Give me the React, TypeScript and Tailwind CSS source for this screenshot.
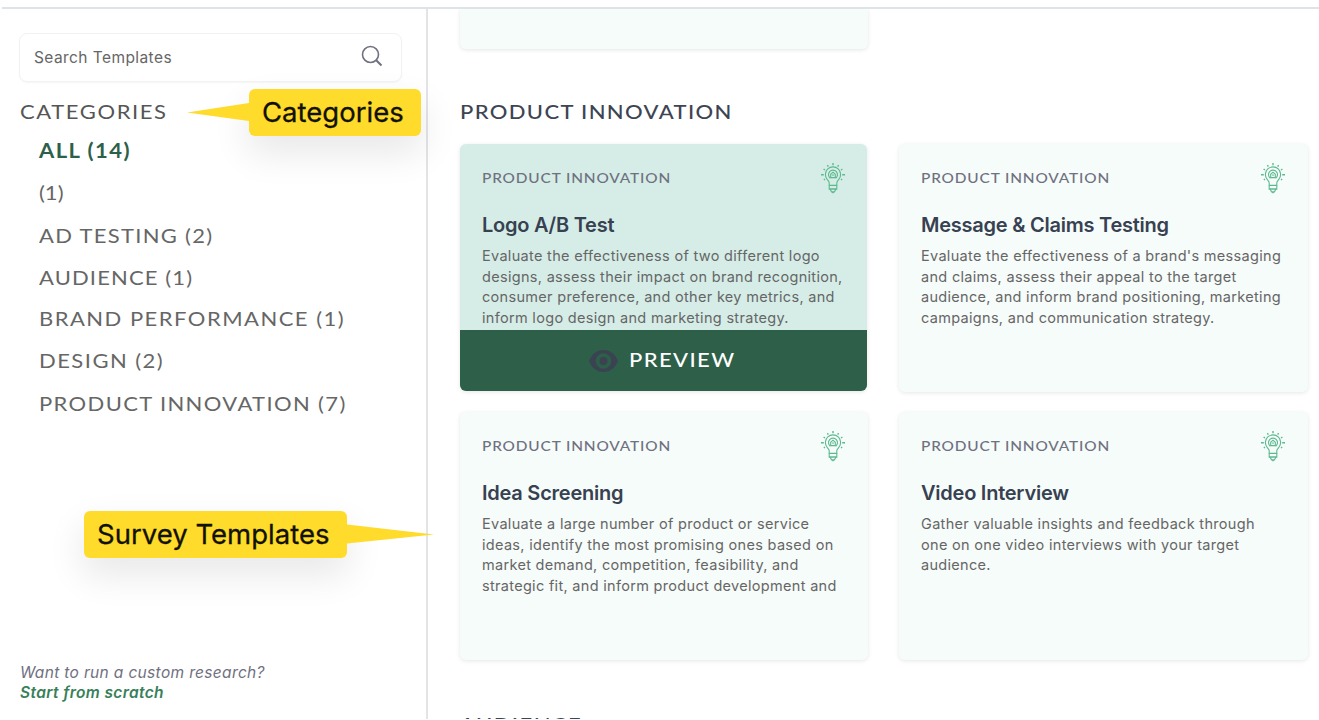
import type { ReactNode } from "react";

function Wide({ children, className = "" }: { children: ReactNode; className?: string }) {
  return (
    <span className={`inline-block origin-left scale-x-110 whitespace-nowrap font-['Lato',sans-serif] ${className}`}>
      {children}
    </span>
  );
}

function BulbIcon() {
  return (
    <svg width="24" height="31" viewBox="0 0 24 31" fill="none" stroke="#5cb98f" strokeWidth="1.1" className="mr-px shrink-0">
      <path strokeWidth="1.4" d="M12 0v2.200M6.400 2.200l.9 1.500M17.600 2.200l-.9 1.500M2.600 6.200l1.400.8M21.400 6.200l-1.400.8M0 11.800h2.800M21.200 11.800H24M2.800 16.900l1.200-.7M21.200 16.900l-1.200-.7" />
      <path d="M8.2 22.4v-2.700c0-1.300-1-2-2-3.300A7.600 7.600 0 1 1 17.800 16.400c-1 1.300-2 2-2 3.300v2.700z" />
      <path d="M9.300 15.200a4.500 4.500 0 1 1 5.400 0" />
      <path d="M9.700 14.600v-3.300L12 9.200l2.300 2.100v3.300zM12 11.300v1.600" />
      <path d="M8.200 22.400v3.900h7.600v-3.900M8.200 25.800h7.600M9.200 26.500l1.400 2.400h2.800l1.400-2.400M10.600 28.600l1.400 1.200 1.400-1.200" />
    </svg>
  );
}

function EyeIcon() {
  return (
    <svg width="29" height="22" viewBox="0 0 29 22">
      <path
        fill="#3b4252"
        fillRule="evenodd"
        d="M14.500 0C8 0 2.600 4.400 0 11c2.600 6.600 8 11 14.500 11S26.400 17.600 29 11C26.400 4.400 21 0 14.500 0Zm0 18.800a7.800 7.800 0 1 1 0-15.600 7.800 7.800 0 0 1 0 15.600Zm0-3.800a4 4 0 1 0 0-8 4 4 0 0 0 0 8Z"
      />
    </svg>
  );
}

function Callout({ text, side, className }: { text: string; side: "left" | "right"; className: string }) {
  return (
    <div className={`absolute z-10 flex h-[47px] items-center rounded-[6px] bg-[#ffdb2b] shadow-[0_16px_36px_2px_rgba(0,0,0,0.09)] ${className}`}>
      <span className="whitespace-nowrap text-[27.5px] leading-none text-[#111100] [-webkit-text-stroke:0.3px_#111100]">{text}</span>
      {side === "left" ? (
        <svg className="absolute right-full top-[13px]" width="62" height="20" viewBox="0 0 62 20">
          <path d="M62 1v18L0 10.500Z" fill="#ffdb2b" />
        </svg>
      ) : (
        <svg className="absolute left-full top-[13px]" width="87" height="20" viewBox="0 0 87 20">
          <path d="M0 .5v19L87 10.500Z" fill="#ffdb2b" />
        </svg>
      )}
    </div>
  );
}

const categories = [
  { label: "ALL (14)", style: "font-bold text-[#2c6049] tracking-[1.3px]", row: "h-[41px]" },
  { label: "(1)", style: "text-[#666] tracking-[0px]", row: "h-[43px]" },
  { label: "AD TESTING (2)", style: "text-[#666] tracking-[1.17px]", row: "h-[43px]" },
  { label: "AUDIENCE (1)", style: "text-[#666] tracking-[1.03px]", row: "h-[41px]" },
  { label: "BRAND PERFORMANCE (1)", style: "text-[#666] tracking-[1.34px]", row: "h-[42px]" },
  { label: "DESIGN (2)", style: "text-[#666] tracking-[1.33px]", row: "h-[42px]" },
  { label: "PRODUCT INNOVATION (7)", style: "text-[#666] tracking-[1.24px]", row: "h-[44px]" },
];

type Template = { title: string; lines: string[]; active?: boolean };

const templates: Template[] = [
  {
    title: "Logo A/B Test",
    active: true,
    lines: [
      "Evaluate the effectiveness of two different logo",
      "designs, assess their impact on brand recognition,",
      "consumer preference, and other key metrics, and",
      "inform logo design and marketing strategy.",
    ],
  },
  {
    title: "Message & Claims Testing",
    lines: [
      "Evaluate the effectiveness of a brand's messaging",
      "and claims, assess their appeal to the target",
      "audience, and inform brand positioning, marketing",
      "campaigns, and communication strategy.",
    ],
  },
  {
    title: "Idea Screening",
    lines: [
      "Evaluate a large number of product or service",
      "ideas, identify the most promising ones based on",
      "market demand, competition, feasibility, and",
      "strategic fit, and inform product development and",
    ],
  },
  {
    title: "Video Interview",
    lines: [
      "Gather valuable insights and feedback through",
      "one on one video interviews with your target",
      "audience.",
    ],
  },
];

function Card({ t }: { t: Template }) {
  return (
    <article
      className={`flex flex-col overflow-hidden rounded-[6px] shadow-[0_1px_4px_rgba(0,0,0,0.1)] ${
        t.active ? "mb-px mr-px bg-[#d5ede6]" : "bg-[#f6fcfa]"
      }`}
    >
      <div className={`flex h-[186px] shrink-0 flex-col pl-[22px] pt-[19px] ${t.active ? "pr-[21px]" : "pr-[22px]"}`}>
        <div className="flex h-[31px] items-start justify-between">
          <Wide className="pt-[5px] text-[14px] font-medium leading-[20px] tracking-[0.77px] text-[#6f7080]">PRODUCT INNOVATION</Wide>
          <BulbIcon />
        </div>
        <h3 className="mt-[18px] whitespace-nowrap text-[20px] font-semibold leading-[26px] tracking-[-0.24px] text-[#374151]">{t.title}</h3>
        <p className="mt-[8px] whitespace-nowrap text-[14.5px] leading-[20.5px] tracking-[0.31px] text-[#666]">
          {t.lines.map((l) => (
            <span key={l} className="block">{l}</span>
          ))}
        </p>
      </div>
      {t.active && (
        <div className="flex flex-1 items-center bg-[#2d5f49] pl-[129px]">
          <EyeIcon />
          <Wide className="ml-[11px] pb-[4px] text-[20px] font-medium leading-[24px] tracking-[1.27px] text-white">PREVIEW</Wide>
        </div>
      )}
    </article>
  );
}

export default function App() {
  return (
    <div className="flex h-[719px] w-[1319px] flex-col overflow-hidden bg-white font-['Inter','Liberation_Sans',sans-serif]">
      <div className="ml-[2px] h-[9px] shrink-0 border-b-2 border-[#dfe3e8]" />
      <div className="flex min-h-0 flex-1">
        <aside className="relative flex w-[428px] shrink-0 flex-col border-r-2 border-[#e2e4e6] pl-[20px]">
          <div className="-ml-px mt-[24px] flex h-[49px] w-[383px] shrink-0 items-center justify-between rounded-[8px] border-[1.5px] border-[#f2f2f3] pl-[14px] pr-[18px] shadow-[0_1px_2px_rgba(0,0,0,0.04)]">
            <span className="text-[15.5px] tracking-[0.42px] text-[#666]">Search Templates</span>
            <svg width="23" height="23" viewBox="0 0 23 23" fill="none" stroke="#6f7080" strokeWidth="1.6" className="-mt-[5px]">
              <circle cx="10.500" cy="10.500" r="8" />
              <path d="M16.200 16.200l5.300 5.300" strokeWidth="2" />
            </svg>
          </div>
          <h2 className="mt-[17px] h-[24px] text-[20px] leading-[24px] text-[#555]">
            <Wide className="tracking-[1.45px]">CATEGORIES</Wide>
          </h2>
          <ul className="mt-[6px] flex flex-col pl-[19px]">
            {categories.map((c) => (
              <li key={c.label} className={`flex items-center text-[20px] leading-[24px] ${c.row}`}>
                <Wide className={c.style}>{c.label}</Wide>
              </li>
            ))}
          </ul>
          <div className="mb-[16px] mt-auto text-[15.5px] italic leading-[20px]">
            <p className="tracking-[0.34px] text-[#6f7080]">Want to run a custom research?</p>
            <p className="font-semibold tracking-[0.38px] text-[#38805a]">Start from scratch</p>
          </div>
          <Callout text="Categories" side="left" className="left-[249px] top-[80px] w-[172px] pl-[13px] tracking-[0.02px]" />
          <Callout text="Survey Templates" side="right" className="left-[84px] top-[502px] w-[263px] pl-[13px] tracking-[0.02px]" />
        </aside>
        <main className="flex min-w-0 flex-1 flex-col overflow-hidden pl-[32px]">
          <div className="h-[40px] w-[408px] shrink-0 rounded-b-[6px] bg-[#f6fcfa] shadow-[0_1px_4px_rgba(0,0,0,0.1)]" />
          <h2 className="mt-[50px] h-[24px] shrink-0 text-[20px] font-medium leading-[24px] text-[#3d4452]">
            <Wide className="tracking-[1.23px]">PRODUCT INNOVATION</Wide>
          </h2>
          <div className="mt-[21px] grid shrink-0 grid-cols-[408px_409px] grid-rows-[248px_248px] gap-x-[31px] gap-y-[20px]">
            {templates.map((t) => (
              <Card key={t.title} t={t} />
            ))}
          </div>
          <h2 className="mt-[52px] h-[24px] shrink-0 text-[20px] font-medium leading-[24px] text-[#3d4452]">
            <Wide className="tracking-[1.3px]">AUDIENCE</Wide>
          </h2>
        </main>
      </div>
    </div>
  );
}
